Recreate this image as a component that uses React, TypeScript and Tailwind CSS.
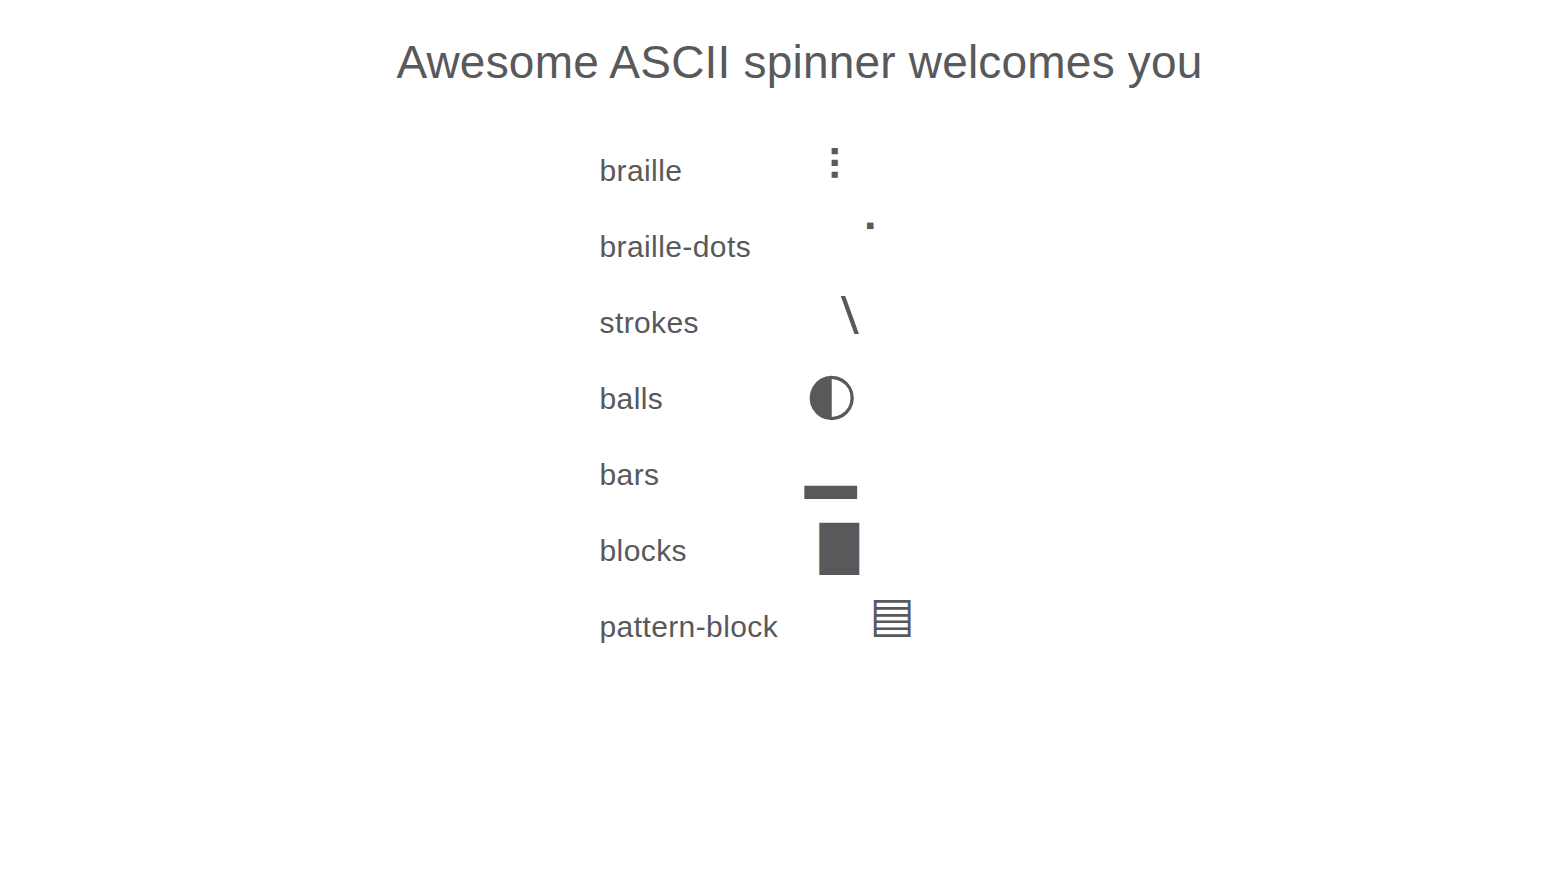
import React from 'react';

type Row = { name: string; frame: string; glyphClass: string };

// each spinner shows one frame; sizes/offsets tuned per glyph
const rows: Row[] = [
  { name: 'braille', frame: '⠇', glyphClass: 'text-[42px] ml-[26px] -translate-y-[4px]' },
  { name: 'braille-dots', frame: '⠁', glyphClass: 'text-[44px] ml-[61px] -translate-y-[5px]' },
  { name: 'strokes', frame: '\\', glyphClass: 'text-[47px] ml-[42px] -translate-y-[10px] scale-x-[1.15]' },
  { name: 'balls', frame: '◐', glyphClass: 'text-[58px] ml-[7px] -translate-y-[6px]' },
  { name: 'bars', frame: '▂', glyphClass: 'text-[54px] ml-[5px] -translate-y-[2px] origin-left scale-x-[1.24] scale-y-[0.81]' },
  { name: 'blocks', frame: '█', glyphClass: 'text-[44px] ml-[20px] -translate-y-[2px] origin-left scale-x-[1.15]' },
  { name: 'pattern-block', frame: '▤', glyphClass: 'text-[48px] ml-[70px] -translate-y-[13px]' },
];

export default function App() {
  return (
    <div className="min-h-screen bg-white text-[#58595b] font-['Liberation_Sans',Arial,sans-serif] pl-[51px] flex flex-col items-center">
      <h1 className="text-[46px] leading-none mt-[39px] tracking-[0.2px]">Awesome ASCII spinner welcomes you</h1>
      <div className="mt-[48px] w-[400px] flex flex-col">
        {rows.map((row) => (
          <div key={row.name} className="h-[76px] flex items-center">
            <span className="w-[200px] shrink-0 text-[30px] leading-none tracking-[0.4px]">{row.name}</span>
            <span className={`inline-block leading-none font-['DejaVu_Sans',sans-serif] ${row.glyphClass}`}>{row.frame}</span>
          </div>
        ))}
      </div>
    </div>
  );
}
